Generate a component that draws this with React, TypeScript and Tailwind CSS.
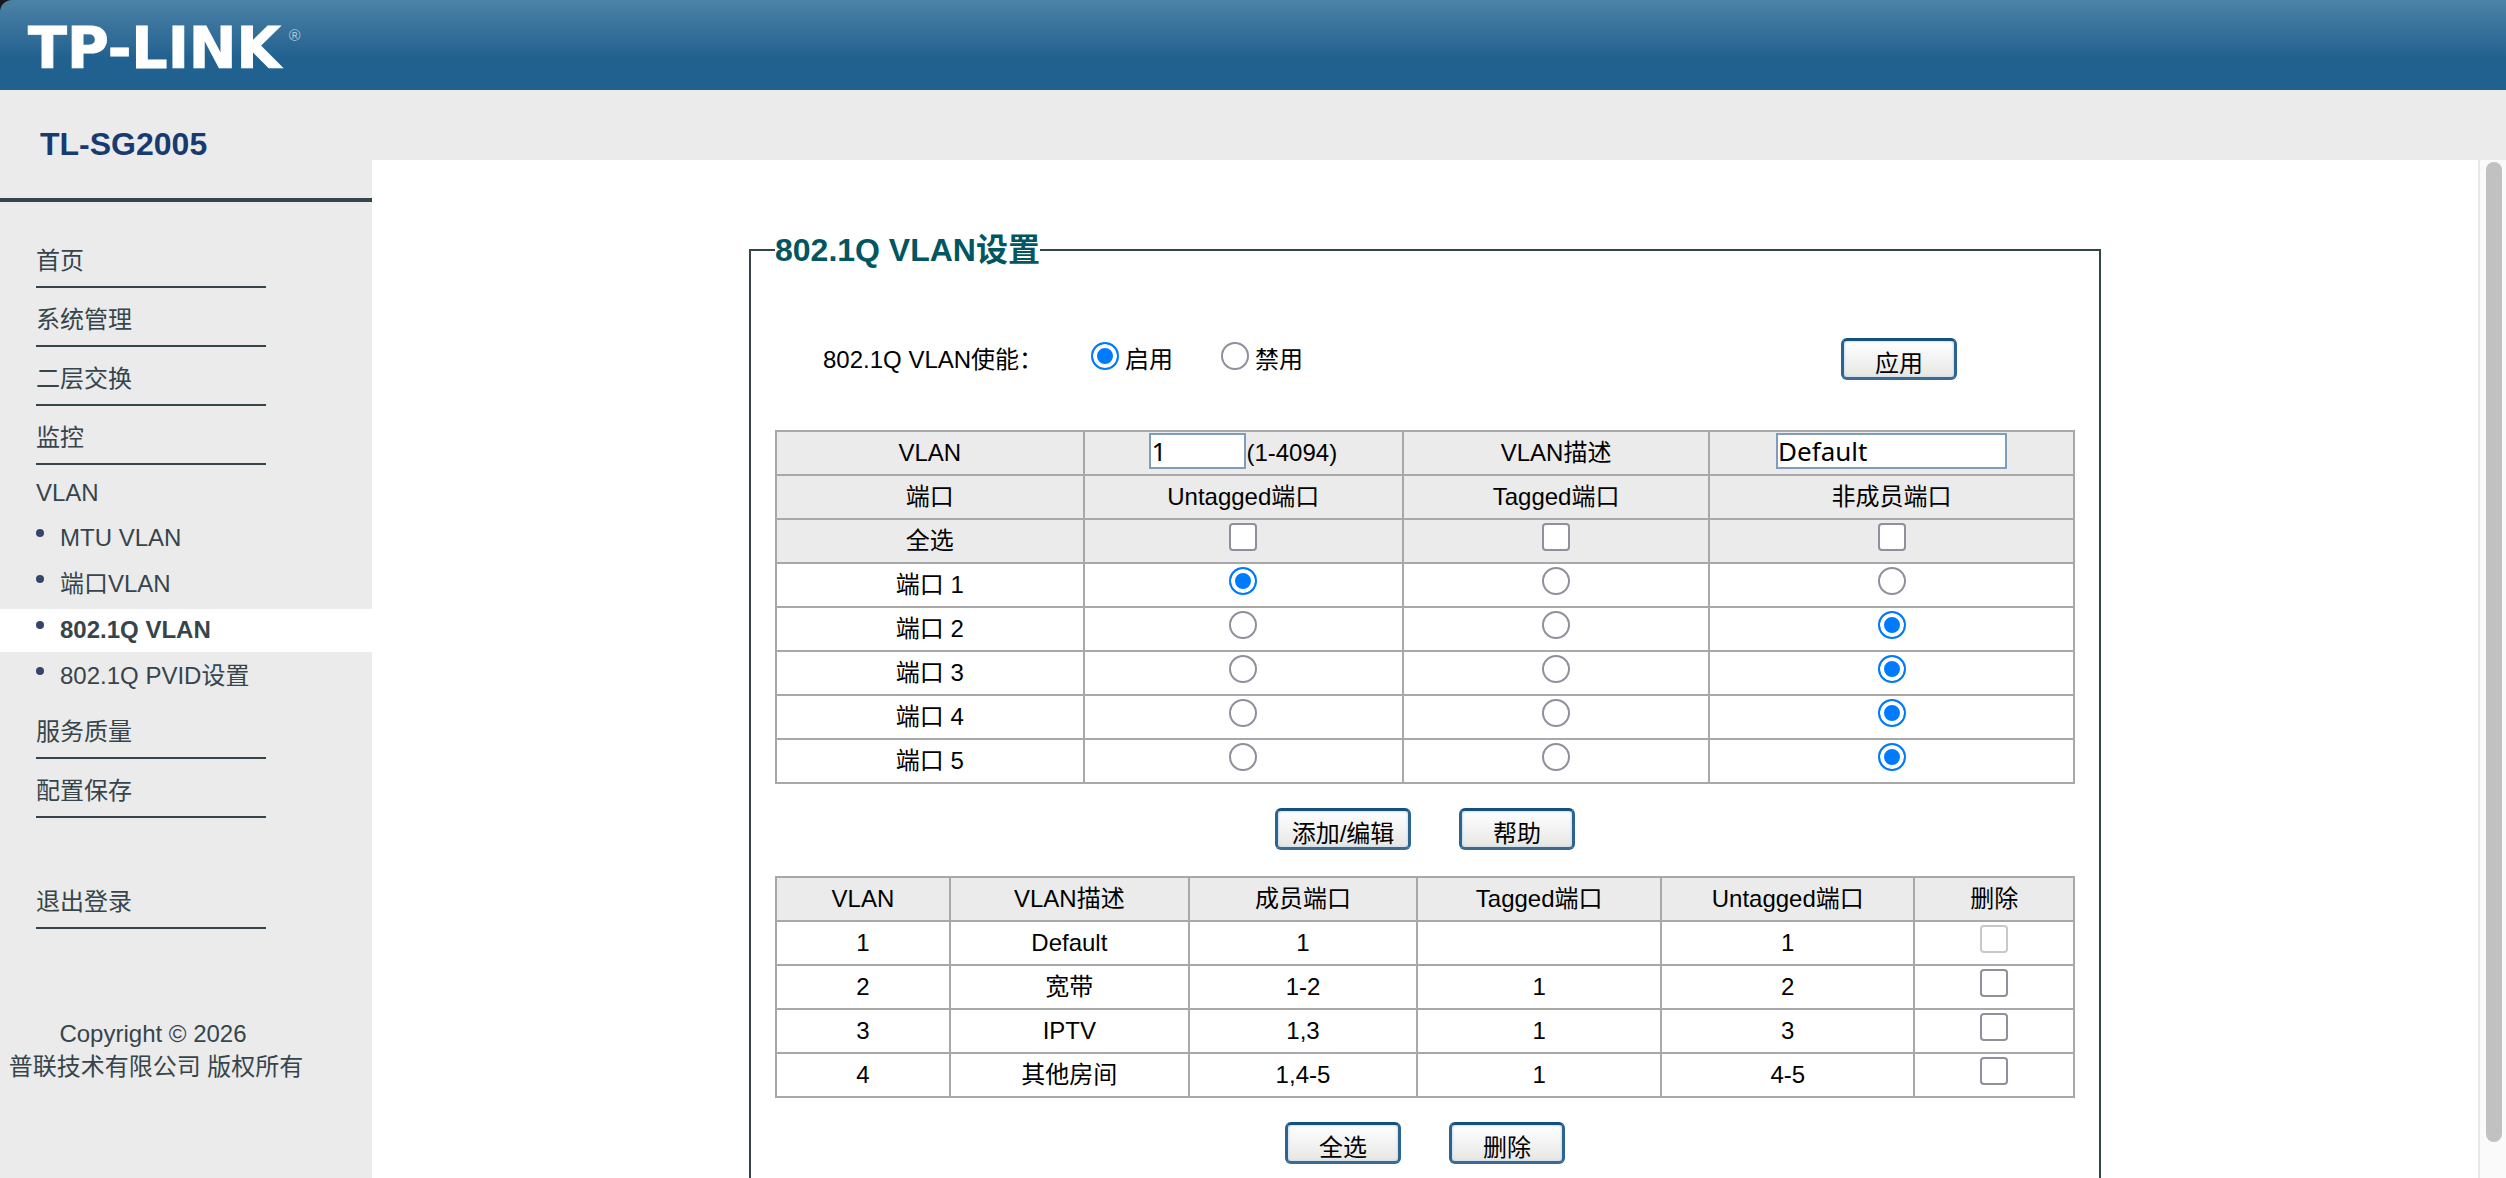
import React from "react";

const linkRow =
  "flex h-[59px] w-[230px] items-center border-b-2 border-[#36454c] pt-1.5 hover:text-black";
const cell = "border-2 border-[#a8a8a8] p-0 text-center font-normal";
const controlCell = "border-2 border-[#a8a8a8] px-0 pt-[3px] pb-0 align-top";
const radio =
  "block size-7 shrink-0 appearance-none rounded-full border-2 border-[#8f8f9d] bg-white checked:border-[#007aff] checked:bg-[#007aff] checked:shadow-[inset_0_0_0_4px_#fff]";
const checkbox =
  "block size-7 shrink-0 appearance-none rounded border-2 border-[#8f8f9d] bg-white checked:bg-[#007aff] disabled:border-[#c8c8cc]";
const textBox =
  "block h-9 border-2 border-[#7f9db9] bg-white px-0 font-['Noto_Sans',sans-serif] text-[26px] leading-8 text-black outline-none";

function PushButton({ wide = false, children }: { wide?: boolean; children: React.ReactNode }) {
  return (
    <button
      type="button"
      className={
        "h-[42px] rounded-md border-[3px] border-t-[#16507f] border-r-[#2c648f] border-b-[#3b6a93] border-l-[#2c648f] bg-linear-to-b from-white via-[#f3f3f3] to-[#e6e6e1] pt-2.5 text-center leading-[26px] whitespace-nowrap shadow-[inset_0_0_2px_1px_#cfe0f2] " +
        (wide ? "w-[136px]" : "w-[116px]")
      }
    >
      {children}
    </button>
  );
}

const topLinks = ["首页", "系统管理", "二层交换", "监控"];
const vlanLinks = ["MTU VLAN", "端口VLAN", "802.1Q VLAN", "802.1Q PVID设置"];
const bottomLinks = ["服务质量", "配置保存"];

function Sidebar() {
  return (
    <aside className="w-[372px] shrink-0 bg-[#ebebeb] text-[#36454c]">
      <h1 className="flex h-28 items-center border-b-4 border-[#36454c] pl-10 text-[32px] font-bold text-[#173b70]">
        TL-SG2005
      </h1>
      <nav className="pt-[27px]">
        <ul className="pl-9">
          {topLinks.map((t) => (
            <li key={t}>
              <a href="#" className={linkRow}>{t}</a>
            </li>
          ))}
          <li>
            <a href="#" className="flex h-[52px] items-center pt-1">VLAN</a>
          </li>
        </ul>
        <ul className="flex flex-col gap-[3px]">
          {vlanLinks.map((t) => {
            const active = t === "802.1Q VLAN";
            return (
              <li key={t}>
                <a
                  href="#"
                  aria-current={active ? "page" : undefined}
                  className={"flex h-[43px] items-center gap-4 pb-0.5 pl-9 " + (active ? "bg-white font-bold" : "")}
                >
                  <span className="mt-3 size-2 self-start rounded-full bg-[#34466b]" />
                  {t}
                </a>
              </li>
            );
          })}
        </ul>
        <ul className="pt-0.5 pl-9">
          {bottomLinks.map((t) => (
            <li key={t}>
              <a href="#" className={linkRow}>{t}</a>
            </li>
          ))}
          <li className="mt-[52px]">
            <a href="#" className={linkRow}>退出登录</a>
          </li>
        </ul>
      </nav>
      <footer className="mt-[88px] w-[312px] text-center leading-[33px]">
        <p className="pr-1.5">Copyright © 2026</p>
        <p>普联技术有限公司 版权所有</p>
      </footer>
    </aside>
  );
}

const ports = [
  { id: 1, value: "untagged" },
  { id: 2, value: "none" },
  { id: 3, value: "none" },
  { id: 4, value: "none" },
  { id: 5, value: "none" },
];
const kinds = [
  { key: "untagged", label: "Untagged端口" },
  { key: "tagged", label: "Tagged端口" },
  { key: "none", label: "非成员端口" },
];

function MembershipTable() {
  return (
    <table className="w-full table-fixed border-collapse">
      <colgroup>
        <col className="w-[23.7%]" />
        <col className="w-[24.6%]" />
        <col className="w-[23.6%]" />
        <col className="w-[28.1%]" />
      </colgroup>
      <thead className="bg-[#ebebeb]">
        <tr className="h-11">
          <th scope="row" className={cell}>
            <label htmlFor="vid">VLAN</label>
          </th>
          <td className={cell}>
            <div className="-mt-1 flex items-center justify-center">
              <input id="vid" defaultValue="1" className={textBox + " w-[97px]"} />
              <span className="pt-1">(1-4094)</span>
            </div>
          </td>
          <th scope="row" className={cell}>
            <label htmlFor="vdesc">VLAN描述</label>
          </th>
          <td className={cell}>
            <div className="-mt-1 flex justify-center">
              <input id="vdesc" defaultValue="Default" className={textBox + " w-[231px]"} />
            </div>
          </td>
        </tr>
        <tr className="h-11">
          <th scope="col" className={cell}>端口</th>
          {kinds.map((k) => (
            <th key={k.key} scope="col" className={cell}>{k.label}</th>
          ))}
        </tr>
        <tr className="h-11">
          <th scope="row" className={cell}>全选</th>
          {kinds.map((k) => (
            <td key={k.key} className={controlCell}>
              <input type="checkbox" aria-label={"全选 " + k.label} className={checkbox + " mx-auto"} />
            </td>
          ))}
        </tr>
      </thead>
      <tbody>
        {ports.map((p) => (
          <tr key={p.id} className="h-11">
            <th scope="row" className={cell}>端口 {p.id}</th>
            {kinds.map((k) => (
              <td key={k.key} className={controlCell}>
                <input
                  type="radio"
                  name={"port-" + p.id}
                  aria-label={"端口 " + p.id + " " + k.label}
                  defaultChecked={p.value === k.key}
                  className={radio + " mx-auto"}
                />
              </td>
            ))}
          </tr>
        ))}
      </tbody>
    </table>
  );
}

const vlans = [
  ["1", "Default", "1", "", "1"],
  ["2", "宽带", "1-2", "1", "2"],
  ["3", "IPTV", "1,3", "1", "3"],
  ["4", "其他房间", "1,4-5", "1", "4-5"],
];

function VlanTable() {
  return (
    <table className="w-full table-fixed border-collapse">
      <colgroup>
        <col className="w-[13.4%]" />
        <col className="w-[18.4%]" />
        <col className="w-[17.6%]" />
        <col className="w-[18.8%]" />
        <col className="w-[19.5%]" />
        <col className="w-[12.3%]" />
      </colgroup>
      <thead className="bg-[#ebebeb]">
        <tr className="h-11">
          {["VLAN", "VLAN描述", "成员端口", "Tagged端口", "Untagged端口", "删除"].map((h) => (
            <th key={h} scope="col" className={cell}>{h}</th>
          ))}
        </tr>
      </thead>
      <tbody>
        {vlans.map((row) => (
          <tr key={row[0]} className="h-11">
            {row.map((v, i) => (
              <td key={i} className={cell}>{v}</td>
            ))}
            <td className={controlCell}>
              <input
                type="checkbox"
                aria-label={"删除 VLAN " + row[0]}
                disabled={row[0] === "1"}
                className={checkbox + " mx-auto"}
              />
            </td>
          </tr>
        ))}
      </tbody>
    </table>
  );
}

export default function App() {
  return (
    <div className="flex h-screen flex-col overflow-hidden bg-white font-['Liberation_Sans','Noto_Sans_CJK_SC',sans-serif] text-[24px] leading-9 text-black">
      <header className="h-[90px] shrink-0 bg-[#14181f]">
        <div className="flex h-full items-center rounded-tl-xl bg-linear-to-b from-[#4b82a7] to-[#21618f] to-65% pt-1.5 pl-7 text-white">
          <span className="font-['DejaVu_Sans',sans-serif] text-[57px] leading-none font-bold [-webkit-text-stroke:1px_white]">
            TP-LINK
          </span>
          <span className="mb-6 ml-2 text-base leading-none text-[#a9c5d8]">®</span>
        </div>
      </header>
      <div className="flex min-h-0 flex-1">
        <Sidebar />
        <div className="flex min-w-0 flex-1 flex-col">
          <div className="h-[70px] shrink-0 bg-[#ebebeb]" />
          <div className="flex min-h-0 flex-1">
            <main className="min-w-0 flex-1 overflow-hidden px-6 pt-[72px]">
              <fieldset className="mx-auto w-full max-w-[1352px] border-2 border-[#36454c] px-6 pb-16">
                <legend className="text-[32px] leading-9 font-bold text-[#02565f]">802.1Q VLAN设置</legend>
                <div className="mt-[70px] mb-12 flex pr-[118px] pl-12">
                  <span id="enable" className="w-[268px] leading-11">802.1Q VLAN使能：</span>
                  <div role="radiogroup" aria-labelledby="enable" className="flex gap-12">
                    <label className="flex gap-1.5 leading-11">
                      <input type="radio" name="enable" defaultChecked className={radio + " mt-1"} />
                      启用
                    </label>
                    <label className="flex gap-1.5 leading-11">
                      <input type="radio" name="enable" className={radio + " mt-1"} />
                      禁用
                    </label>
                  </div>
                  <div className="ml-auto flex items-start">
                    <PushButton>应用</PushButton>
                  </div>
                </div>
                <MembershipTable />
                <div className="my-6 flex justify-center gap-12 pb-0.5">
                  <PushButton wide>添加/编辑</PushButton>
                  <PushButton>帮助</PushButton>
                </div>
                <VlanTable />
                <div className="mt-6 flex justify-center gap-12">
                  <PushButton>全选</PushButton>
                  <PushButton>删除</PushButton>
                </div>
              </fieldset>
            </main>
            <div aria-hidden="true" className="flex w-7 shrink-0 flex-col border-l-2 border-[#e8e8e8] bg-[#fafafa] pt-0.5 pr-1 pb-9 pl-1.5">
              <div className="flex-1 rounded-full bg-[#c1c1c1]" />
            </div>
          </div>
        </div>
      </div>
    </div>
  );
}
